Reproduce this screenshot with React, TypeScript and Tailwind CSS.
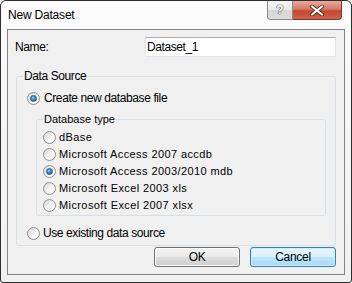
import React from "react";

const Radio = ({ checked }: { checked?: boolean }) => (
  <span className="relative flex w-[13px] h-[13px] shrink-0 items-center justify-center rounded-full border border-[#8e8f8f] bg-gradient-to-br from-[#d6d6d6] via-[#f2f2f2] to-white">
    {checked && (
      <span className="w-[7px] h-[7px] rounded-full bg-[radial-gradient(circle_at_40%_35%,#9ad4f6_0%,#2d8ad0_45%,#1b4f7e_100%)] border border-[#1f5a8a]" />
    )}
  </span>
);

const Option = ({ label, checked }: { label: string; checked?: boolean }) => (
  <div className="flex items-center h-[17px]">
    <Radio checked={checked} />
    <span className="ml-[3px] text-[11px] tracking-[0.4px] leading-none">{label}</span>
  </div>
);

const Btn = ({ label, primary }: { label: string; primary?: boolean }) => (
  <button
    className={
      "w-[86px] h-[20px] rounded-[3px] border text-[12px] tracking-[-0.3px] leading-none flex items-center justify-center " +
      (primary
        ? "border-[#3c7fb1] bg-[linear-gradient(#eaf6fd_0%,#d9f0fc_50%,#bee6fd_50%,#a7d9f5_100%)] shadow-[inset_0_0_0_1px_#cbeeff]"
        : "border-[#707070] bg-[linear-gradient(#f2f2f2_0%,#ebebeb_50%,#dddddd_50%,#cfcfcf_100%)] shadow-[inset_0_0_0_1px_#fcfcfc]")
    }
  >
    {label}
  </button>
);

export default function App() {
  const types = [
    { label: "dBase" },
    { label: "Microsoft Access 2007 accdb" },
    { label: "Microsoft Access 2003/2010 mdb", checked: true },
    { label: "Microsoft Excel 2003 xls" },
    { label: "Microsoft Excel 2007 xlsx" },
  ];

  return (
    <div
      className="w-[352px] h-[283px] bg-white text-black"
      style={{ fontFamily: '"Liberation Sans", Arial, sans-serif' }}
    >
      <div className="w-[352px] h-[283px] flex flex-col rounded-t-[6px] rounded-b-[3px] border border-[#2e2e2e] bg-gradient-to-b from-[#fbfbfb] to-[#f1f1f1]">
        {/* Title bar */}
        <div className="h-[28px] flex items-start shrink-0">
          <div className="ml-[7px] mt-[7px] text-[12px] tracking-[-0.2px] leading-[14px]">New Dataset</div>
          <div className="ml-auto mr-[9px] flex">
            <div className="w-[26px] h-[19px] flex items-center justify-center rounded-bl-[4px] border border-t-0 border-[#8a8a8a] bg-[linear-gradient(#f5f5f5_0%,#e9e9e9_50%,#d5d5d5_50%,#dcdcdc_100%)] text-[12px] font-bold text-white [text-shadow:0_0_1px_#555,0_0_1px_#555,0_0_1px_#555]">
              ?
            </div>
            <div className="w-[49px] h-[19px] flex items-center justify-center rounded-br-[4px] border border-t-0 border-l-0 border-[#7a3a30] bg-[linear-gradient(#e8a99c_0%,#d47c6b_45%,#c4462e_55%,#d0634a_100%)]">
              <svg width="14" height="11" viewBox="0 0 14 11">
                <path d="M2 1.5 L12 9.5 M12 1.5 L2 9.5" stroke="#5a2a22" strokeWidth="4" strokeLinecap="round" />
                <path d="M2 1.5 L12 9.5 M12 1.5 L2 9.5" stroke="#ffffff" strokeWidth="2.2" strokeLinecap="round" />
              </svg>
            </div>
          </div>
        </div>

        {/* Client area */}
        <div className="mx-[6px] mb-[7px] flex-1 border border-[#858585] bg-[#f0f0f0] flex flex-col text-[12px] tracking-[-0.4px]">
          <div className="flex items-center h-[20px] mt-[7px]">
            <span className="ml-[7px]">Name:</span>
            <div className="ml-auto mr-[8px] w-[191px] h-[20px] bg-white border border-[#e2e3ea] border-t-[#abadb3] flex items-center pl-[1px]">
              Dataset_1
            </div>
          </div>

          <fieldset className="mt-[11px] ml-[8px] mr-[8px] h-[178px] border border-[#d5dfe5] rounded-[3px] px-0 pb-0 min-w-0">
            <legend className="ml-[6px] px-[1px] leading-[16px]">Data Source</legend>
            <div className="flex items-center h-[16px] mt-[6px] ml-[10px]">
              <Radio checked />
              <span className="ml-[4px] leading-none">Create new database file</span>
            </div>
            <fieldset className="mt-[6px] ml-[19px] mr-[9px] h-[104px] border border-[#d5dfe5] rounded-[3px] px-0 pb-0 min-w-0 tracking-normal">
              <legend className="ml-[6px] px-[1px] text-[11px] leading-[14px]">Database type</legend>
              <div className="ml-[6px] mt-[3px] flex flex-col">
                {types.map((t) => (
                  <Option key={t.label} label={t.label} checked={t.checked} />
                ))}
              </div>
            </fieldset>
            <div className="flex items-center h-[16px] mt-[9px] ml-[10px]">
              <Radio />
              <span className="ml-[3px] leading-none">Use existing data source</span>
            </div>
          </fieldset>

          <div className="mt-[1px] mr-[8px] flex justify-end gap-[10px] tracking-normal">
            <Btn label="OK" />
            <Btn label="Cancel" primary />
          </div>
        </div>
      </div>
    </div>
  );
}
